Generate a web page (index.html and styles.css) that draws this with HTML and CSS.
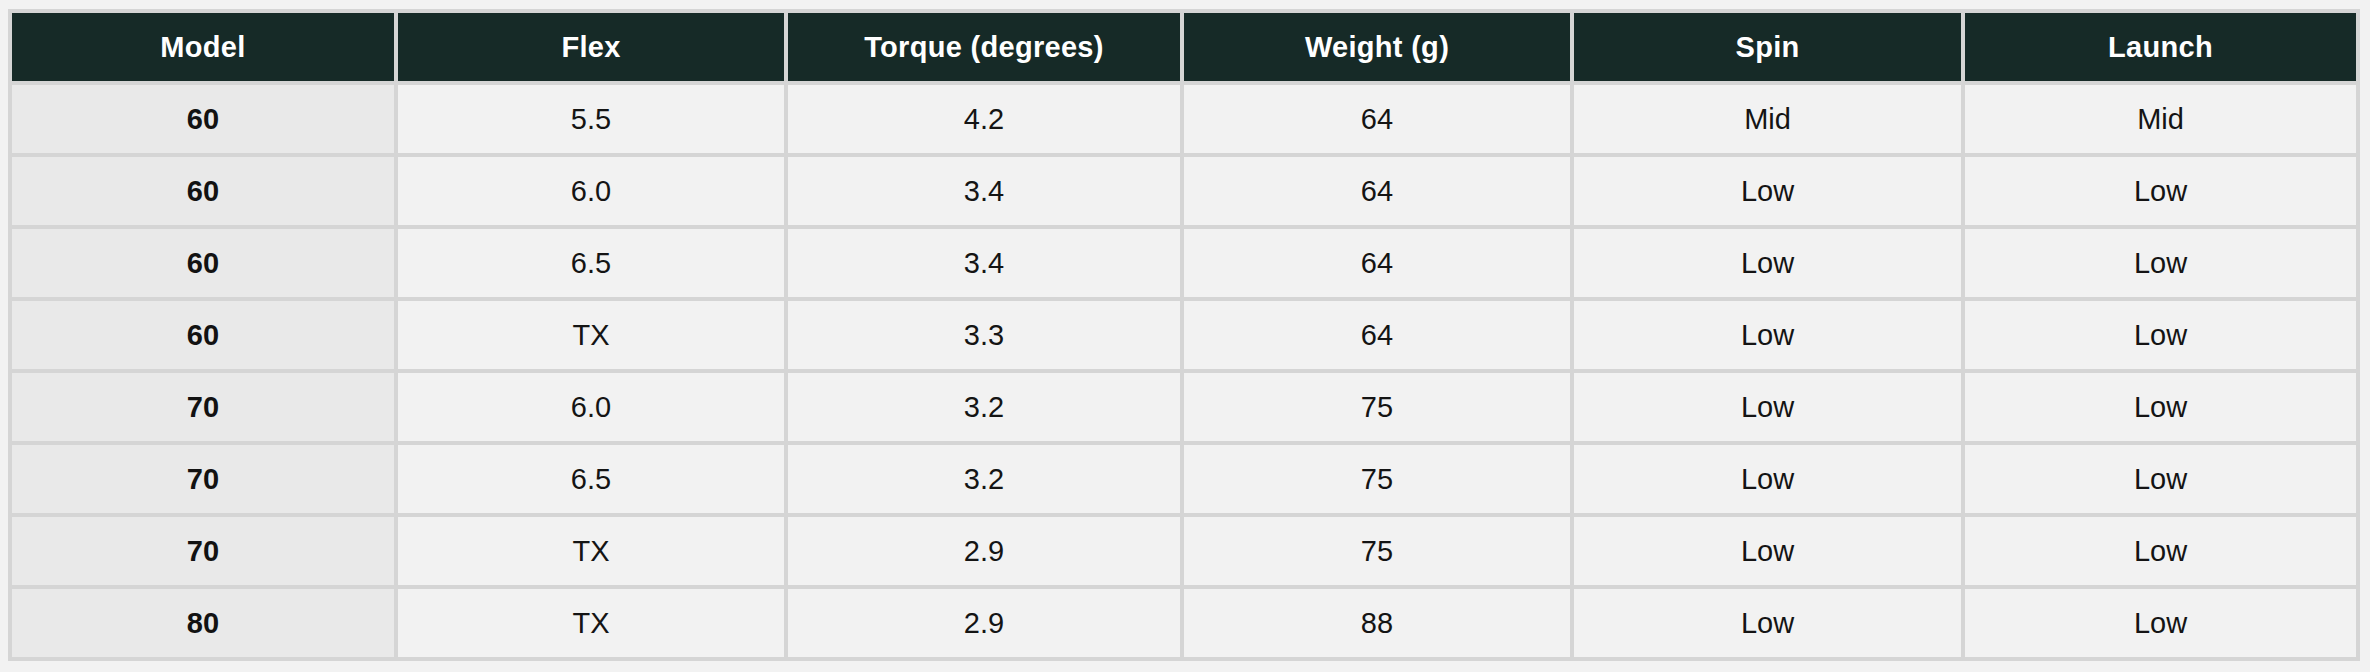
FILE: index.html
```html
<!DOCTYPE html>
<html lang="en">
<head>
<meta charset="utf-8">
<title>Shaft specs</title>
<link rel="stylesheet" href="styles.css">
</head>
<body>
<table class="specs">
  <colgroup>
    <col class="c-model">
    <col class="c-flex">
    <col class="c-torque">
    <col class="c-weight">
    <col class="c-spin">
    <col class="c-launch">
  </colgroup>
  <thead>
    <tr><th>Model</th><th>Flex</th><th>Torque (degrees)</th><th>Weight (g)</th><th>Spin</th><th>Launch</th></tr>
  </thead>
  <tbody>
    <tr><th>60</th><td>5.5</td><td>4.2</td><td>64</td><td>Mid</td><td>Mid</td></tr>
    <tr><th>60</th><td>6.0</td><td>3.4</td><td>64</td><td>Low</td><td>Low</td></tr>
    <tr><th>60</th><td>6.5</td><td>3.4</td><td>64</td><td>Low</td><td>Low</td></tr>
    <tr><th>60</th><td>TX</td><td>3.3</td><td>64</td><td>Low</td><td>Low</td></tr>
    <tr><th>70</th><td>6.0</td><td>3.2</td><td>75</td><td>Low</td><td>Low</td></tr>
    <tr><th>70</th><td>6.5</td><td>3.2</td><td>75</td><td>Low</td><td>Low</td></tr>
    <tr><th>70</th><td>TX</td><td>2.9</td><td>75</td><td>Low</td><td>Low</td></tr>
    <tr><th>80</th><td>TX</td><td>2.9</td><td>88</td><td>Low</td><td>Low</td></tr>
  </tbody>
</table>
</body>
</html>
```
FILE: styles.css
```css
html, body {
  background: #f2f2f2;
}
body {
  margin: 9px 10px 8px 8px;
  font-family: "Liberation Sans", Arial, Helvetica, sans-serif;
  color: #141414;
}
.specs {
  width: 2352px;
  table-layout: fixed;
  border-collapse: separate;
  border-spacing: 4px;
  background: #d5d5d5;
  font-size: 29px;
}
.c-model { width: 382px; }
.c-flex { width: 386px; }
.c-torque { width: 392px; }
.c-weight { width: 386px; }
.c-spin { width: 387px; }
.c-launch { width: 391px; }
.specs th,
.specs td {
  height: 68px;
  padding: 0 10px;
  box-sizing: border-box;
  text-align: center;
  vertical-align: middle;
  background: #f2f2f2;
  font-weight: normal;
}
.specs thead th {
  background: #162a27;
  color: #ffffff;
  font-weight: bold;
  letter-spacing: 0.3px;
}
.specs tbody th {
  background: #e9e9e9;
  font-weight: bold;
  color: #121212;
}
```
